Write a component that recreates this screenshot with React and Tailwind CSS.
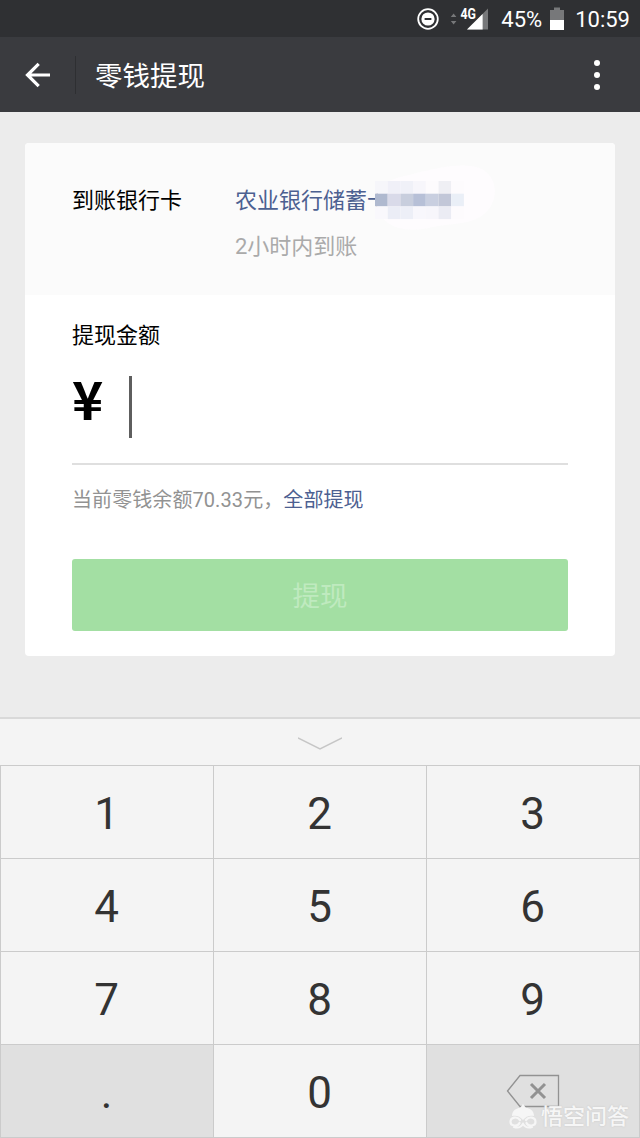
import React, { useState } from 'react';

const KEYS = ['1', '2', '3', '4', '5', '6', '7', '8', '9', '.', '0', 'delete'];

// Censored card number, one row of colours per line of blocks
const MOSAIC = [
  ['#f6f6fa', '#f0f0f8', '#f0f1f8', '#f7f6fb', '#fdfbfd', '#efeff4', '#fdfbfd'],
  ['#afb9cf', '#d9dae9', '#c8cedd', '#b7c0d7', '#c9cfe0', '#c2c7d8', '#eaeff7'],
  ['#f9f8fc', '#ebedf6', '#edeff7', '#f8f7fc', '#f7f6fb', '#ebecf4', '#fdfbfd']
];

const StatusBar = () => (
  <div className="flex h-[37px] items-center justify-end bg-[#2f3033] pt-[2px] pr-[10px] text-white">
    <svg className="mr-[11px] mb-[1px] h-[22px] w-[22px]" viewBox="0 0 22 22" fill="none">
      <circle cx="11" cy="11" r="9.8" stroke="currentColor" strokeWidth="1.8" />
      <circle cx="11" cy="11" r="6.6" fill="currentColor" />
      <path d="M7.6 11h6.8" stroke="#2f3033" strokeWidth="2" />
    </svg>
    <svg className="mr-[12px] mb-[2px] h-[32px] w-[39px]" viewBox="0 -4 39 32">
      <path d="M.8 10l2.8-3.6L6.4 10zM.8 14l2.8 3.6L6.4 14z" fill="#77787a" />
      <path d="M17 22.500L38 1.500v21z" fill="#77787a" />
      <path d="M17 22.500L32.6 6.900V22.500z" fill="#fff" />
      <text x="10.500" y="12" fill="#fff" stroke="#2f3033" strokeWidth="2" paintOrder="stroke" fontSize="14" fontWeight="700" textLength="15.5" lengthAdjust="spacingAndGlyphs">4G</text>
    </svg>
    <span className="text-[22px] leading-none">45%</span>
    <svg className="mr-[11px] mb-[2px] ml-[8px] h-[24px] w-[14px]" viewBox="0 0 14 24">
      <path d="M0 3h4V.5h6V3h4v20H0z" fill="#77787a" />
      <path d="M0 13h14v10H0z" fill="#fff" />
    </svg>
    <span className="text-[22px] leading-none">10:59</span>
  </div>
);

const Header = () => (
  <header className="flex h-[75px] items-center bg-[#3a3b3f] text-white">
    <button type="button" className="ml-[25px]">
      <svg className="h-[26px] w-[26px]" viewBox="0 0 26 26" fill="none" stroke="currentColor" strokeWidth="3.2">
        <path d="M2.5 13H25M13.7 1.8L2.5 13l11.2 11.2" />
      </svg>
    </button>
    <div className="ml-[24px] h-[38px] w-px bg-[#2e2f32]" />
    <h1 className="ml-[19px] flex-1 pt-[5px] text-[27.5px] leading-none">零钱提现</h1>
    <button type="button" className="mr-[40px] flex flex-col gap-[6px]">
      <span className="h-[6px] w-[6px] rounded-full bg-white" />
      <span className="h-[6px] w-[6px] rounded-full bg-white" />
      <span className="h-[6px] w-[6px] rounded-full bg-white" />
    </button>
  </header>
);

const HiddenNumber = () => (
  <div className="absolute top-[-22px] left-[140px]">
    <svg className="h-[76px] w-[122px]" viewBox="0 0 122 76">
      <path d="M1 38C2 24 12 16 34 12C60 5 90-2 107 6C124 15 124 40 108 52C94 62 78 60 58 64C30 71 4 65 1 38z" fill="#fefcfe" />
      {MOSAIC.map((row, y) =>
        row.map((color, x) => (
          <rect key={`${x}-${y}`} x={x * 12.7} y={18 + y * 12.7} width="12.7" height="12.7" fill={color} />
        ))
      )}
    </svg>
  </div>
);

const DeleteIcon = () => (
  <svg className="mb-[1px] ml-[-1px] h-[34px] w-[54px]" viewBox="0 0 54 34" fill="none" stroke="#929292">
    <path d="M1.5 17L14 1.5h38.500v31H14z" strokeWidth="1.3" />
    <path d="M25 10l14 14M39 10l-14 14" strokeWidth="3" />
  </svg>
);

const Watermark = () => (
  <div className="absolute right-[11px] bottom-[8px] flex items-center gap-[4px] text-[#f6f6f6]">
    <svg className="h-[26px] w-[28px]" viewBox="0 0 28 26" fill="none" stroke="currentColor">
      <path d="M3 12C3 6 8 4 11 4l3-4 3 4c3 0 8 2 8 8-4-1-8 0-11 4C11 12 7 11 3 12z" fill="currentColor" stroke="none" />
      <path d="M11 16C8 12 1.500 13 1.500 18c0 4 7 5 9 1M17 16c3-4 9.500-3 9.500 2 0 4-7 5-9 1M5 23c5 1.500 7 0 9-3 2 3 4 4.500 9 3" strokeWidth="2.2" strokeLinecap="round" />
    </svg>
    <span className="text-[22px] leading-[26px] font-medium [text-shadow:0_0_2px_#c4c4c4]">悟空问答</span>
  </div>
);

const Keypad = ({ onPress }) => (
  <div className="relative border-t-2 border-[#d9d9d9] bg-[#f4f4f4]">
    <button type="button" className="flex h-[46px] w-full items-center justify-center">
      <svg className="mt-[2px] h-[13px] w-[44px]" viewBox="0 0 44 13" fill="none" stroke="#c6c6c6" strokeWidth="1.5">
        <path d="M0 .8l22 11 22-11" />
      </svg>
    </button>
    <div className="grid grid-cols-3 gap-px border border-[#cbcbcb] bg-[#cbcbcb]">
      {KEYS.map((key) => (
        <button
          key={key}
          type="button"
          onClick={() => onPress(key)}
          className={`flex h-[92px] items-center justify-center text-[44px] leading-none text-[#333333] ${
            key === '.' || key === 'delete' ? 'bg-[#e0e0e0]' : 'bg-[#f4f4f4]'
          }`}
        >
          {key === 'delete' ? <DeleteIcon /> : <span className="mt-[3px] mr-px">{key}</span>}
        </button>
      ))}
    </div>
    <Watermark />
  </div>
);

const App = () => {
  const [amount, setAmount] = useState('');
  const balance = '70.33';

  const handlePress = (key) => {
    if (key === 'delete') {
      setAmount(amount.slice(0, -1));
      return;
    }
    setAmount(amount + key);
  };

  return (
    <div className="flex h-[1138px] w-[640px] flex-col overflow-hidden bg-[#ececec] font-[Roboto,'Noto_Sans_CJK_SC',sans-serif]">
      <StatusBar />
      <Header />

      <main className="flex-1 px-[25px] pt-[31px]">
        <div className="h-[513px] overflow-hidden rounded-[4px] bg-white">
          <div className="flex h-[152px] bg-[#fbfbfb] pt-[42px] pl-[47px] text-[22px] leading-[32px]">
            <div className="w-[163px] text-black">到账银行卡</div>
            <div className="relative">
              <div className="text-[#4c6091]">农业银行储蓄卡</div>
              <HiddenNumber />
              <div className="mt-[14px] text-[#aaaaaa]">2小时内到账</div>
            </div>
          </div>

          <div className="px-[47px] pt-[25px]">
            <div className="text-[22px] leading-[32px] text-black">提现金额</div>
            <div className="mt-[24px] flex h-[62px] items-start">
              <span className="mt-[-5px] w-[57px] font-['Noto_Sans_CJK_SC',sans-serif] text-[53px] leading-[52px] font-bold text-black">¥</span>
              <span className="text-[50px] leading-[62px]">{amount}</span>
              <span className="h-[62px] w-[3px] bg-[#5e5e5e]" />
            </div>
            <div className="mt-[25px] h-[2px] bg-[#dfdfdf]" />
            <div className="mt-[20px] text-[20px] leading-[30px] tracking-[0.08px] text-[#929292]">
              当前零钱余额{balance}元，
              <button type="button" className="text-[#4c6091]" onClick={() => setAmount(balance)}>全部提现</button>
            </div>
            <button type="button" className="mt-[44px] flex h-[72px] w-full items-center justify-center rounded-[3px] bg-[#a3dfa3] pt-[4px] text-[27.5px] leading-none text-[#bfeabf]">
              提现
            </button>
          </div>
        </div>
      </main>

      <Keypad onPress={handlePress} />
    </div>
  );
};

export default App;
